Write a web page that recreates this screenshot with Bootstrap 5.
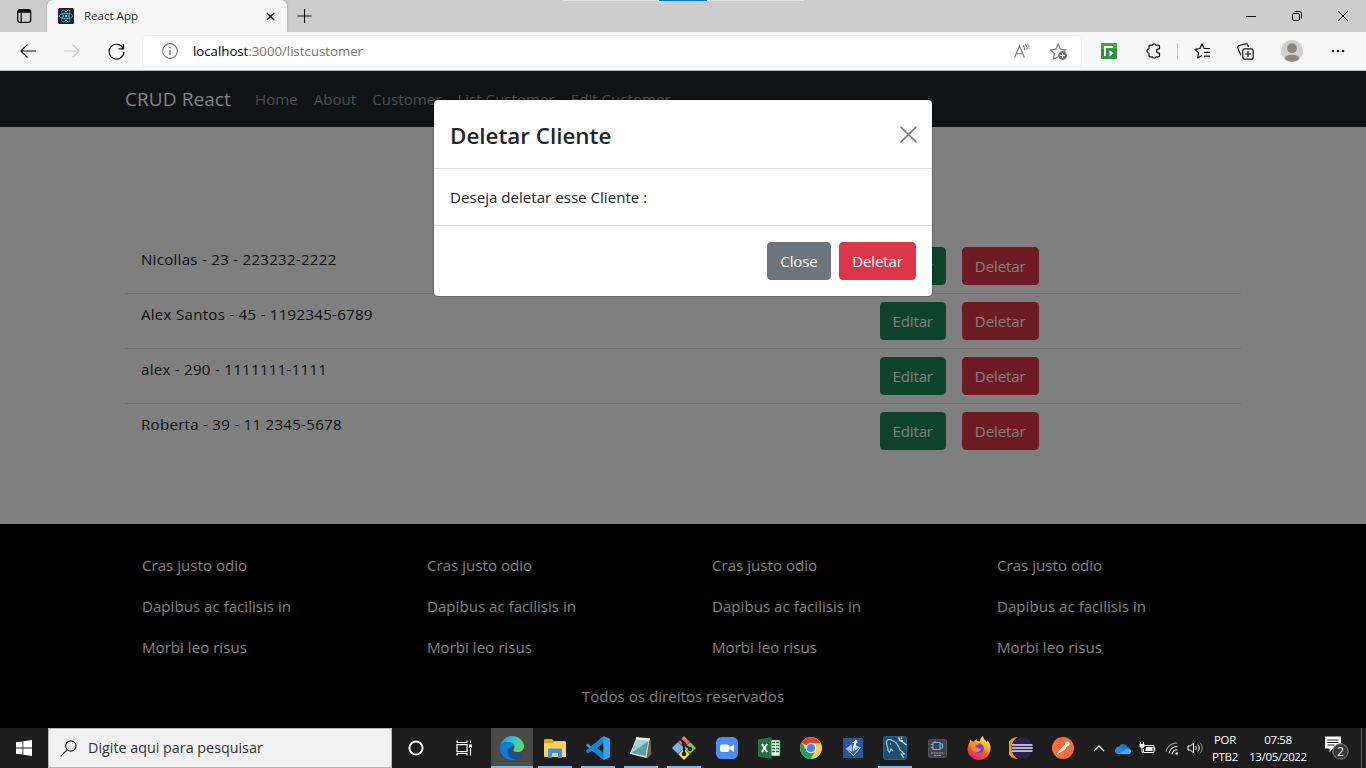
<!DOCTYPE html>
<html lang="pt-br">
<head>
<meta charset="utf-8">
<meta name="viewport" content="width=device-width, initial-scale=1">
<title>React App</title>
<link href="https://cdn.jsdelivr.net/npm/bootstrap@5.3.0/dist/css/bootstrap.min.css" rel="stylesheet">
<script src="https://cdn.jsdelivr.net/npm/bootstrap@5.3.0/dist/js/bootstrap.bundle.min.js" defer></script>
<style>
body{font-family:"Open Sans","Noto Sans",sans-serif;font-size:15.1px;line-height:24px;height:768px;overflow:hidden;letter-spacing:.01px}
svg{display:block;flex:none}
/* browser chrome */
.tabstrip{height:32px;background:#cdcdcd}
.snapbar{left:563px;top:0;width:241px;height:1px;background:linear-gradient(90deg,#e6e6e6 96px,#0078d7 96px 144px,#e6e6e6 144px)}
.tabmenu{width:47px}
.apptab{width:240px;background:#f7f7f7;border-radius:6px 6px 0 0;font-size:11.5px;padding:0 12px 0 11px;box-shadow:0 0 2px #0005;clip-path:inset(0 -3px 0 -3px)}
.tabtitle{margin-left:10px}
.winbtn{width:46px}
.toolbar{height:39px;background:#f7f7f7;border-bottom:1px solid #b9bdbd}
.navtools{width:143px;height:38px;padding-left:20px;gap:28px}
.urlbar{width:938px;height:30px;background:#fff;border-radius:4px;box-shadow:0 0 2px #0002;font-size:13.2px;color:#767676}
.urlbar b{font-weight:400;color:#000}
.urltext{margin-left:13px}
.staradd{margin:0 14px 0 20px}
.exttools{margin-left:20px}
.toolsep{width:1px;height:16px;background:#c3c3c3;margin-left:15px}
/* page */
.viewport{height:657px;background:#fff}
.viewport .container{max-width:1140px}
.dimmer{background:rgba(0,0,0,.5)}
.topnav{height:56px}
.topnav .navbar-brand{width:106px;font-size:19px;letter-spacing:.08px;white-space:nowrap}
.topnav .nav-link{white-space:nowrap}
.btn{--bs-btn-border-radius:.25rem;--bs-btn-font-size:15.1px;line-height:24px;padding-left:0;padding-right:0;text-align:center;letter-spacing:-.15px}
.w-edit{width:66px}.w-del{width:77px}.w-close{width:64px}
.customers{padding-top:112px;height:397px}
.customers .list-group-item{color:#212529;letter-spacing:.26px}
.pagefoot{height:204px;background:#000;color:#fff}
.pagefoot .container{padding-top:20px}
.pagefoot .list-group{--bs-list-group-bg:transparent;--bs-list-group-color:#fff;--bs-list-group-border-color:transparent}
.dialogbox{width:500px;top:28px;left:433px}
.dialogbox .modal-content{border:1px solid rgba(0,0,0,.2);background-clip:padding-box;border-radius:.3rem;overflow:hidden}
.dialogbox h4{font-weight:600;font-size:22.4px;line-height:36px;letter-spacing:0;padding-top:2px;margin-bottom:-2px}
.dialogbox h4+svg{margin-top:10px;margin-right:-.5px}
/* taskbar */
.taskbar{height:40px;background:#1d1d1d;color:#fff}
.cell{width:48px;height:40px}
.searchbox{width:344px;height:40px;background:#f1f1f1;border:1px solid #b9b9b9;color:#333;font-size:14.3px}
.searchbox svg,.searchbox span{margin-left:11px}
.task{width:42px;height:40px}
.apart{margin-right:1px}
.task.running::after{content:"";position:absolute;left:4px;right:4px;bottom:0;height:2px;background:#76b9ed}
.task.active{background:#4b4b4b}
.task.active::after{left:0;right:0}
.tray{width:24px;height:40px}
.traytext{font-size:11.5px;line-height:17px;height:40px;text-align:center;letter-spacing:-.33px;padding-top:3px;white-space:nowrap}
</style>
</head>
<body class="d-flex flex-column">

<header class="tabstrip d-flex position-relative flex-shrink-0">
  <div class="snapbar position-absolute"></div>
  <div class="tabmenu d-flex align-items-center justify-content-center">
    <svg width="16" height="16" viewBox="0 0 16 16" fill="none" stroke="#111" stroke-width="1.3"><rect x="1.7" y="1.700" width="13" height="12.600" rx="2.200"/><path d="M1.700 4h13M5.200 5v9"/><path d="M2 3h12.400" stroke-width="2.600"/></svg>
  </div>
  <div class="apptab d-flex align-items-center">
    <svg width="16" height="16" viewBox="0 0 16 16"><rect width="16" height="16" rx="1.500" fill="#20232a"/><g fill="none" stroke="#61dafb" stroke-width=".7" opacity=".85"><ellipse cx="8" cy="8" rx="6.800" ry="2.600"/><ellipse cx="8" cy="8" rx="6.800" ry="2.600" transform="rotate(60 8 8)"/><ellipse cx="8" cy="8" rx="6.800" ry="2.600" transform="rotate(120 8 8)"/></g><circle cx="8" cy="8" r="1.200" fill="#61dafb"/></svg>
    <span class="tabtitle me-auto">React App</span>
    <svg width="9" height="9" viewBox="0 0 10 10" stroke="#111" stroke-width="1.500"><path d="M1 1l8 8M9 1L1 9"/></svg>
  </div>
  <div class="d-flex align-items-center ps-2 ms-0 me-auto"><svg width="18" height="16" viewBox="0 0 18 16" stroke="#111" stroke-width="1.100"><path d="M9.500 1v14M2.500 8h14"/></svg></div>
  <div class="d-flex align-items-center">
    <div class="winbtn d-flex justify-content-center"><svg width="10" height="10" stroke="#111"><path d="M0 5.500h10"/></svg></div>
    <div class="winbtn d-flex justify-content-center"><svg width="10" height="10" viewBox="0 0 10 10" fill="none" stroke="#111"><rect x=".5" y="2.500" width="7" height="7" rx="1.400"/><path d="M2.500 .5h5a2 2 0 0 1 2 2v5"/></svg></div>
    <div class="winbtn d-flex justify-content-center"><svg width="10" height="10" viewBox="0 0 10 10" stroke="#111"><path d="M0 0l10 10M10 0L0 10"/></svg></div>
  </div>
</header>

<div class="toolbar d-flex align-items-center flex-shrink-0">
  <div class="navtools d-flex align-items-center">
    <svg width="16" height="16" viewBox="0 0 16 16" fill="none" stroke="#111" stroke-width="1.200"><path d="M16 8H.8M7.500 1.500L.8 8l6.700 6.500"/></svg>
    <svg width="16" height="16" viewBox="0 0 16 16" fill="none" stroke="#c8c8c8" stroke-width="1.200"><path d="M0 8h15.200M8.500 1.500L15.200 8l-6.700 6.500"/></svg>
    <svg width="17" height="17" viewBox="0 0 17 17" fill="none" stroke="#111" stroke-width="1.200"><path d="M15.200 5.500A7.400 7.400 0 1 0 15.900 9M15.500 .8v5h-5"/></svg>
  </div>
  <div class="urlbar d-flex align-items-center">
    <svg class="ms-3" width="20" height="18" viewBox="-3 -1 20 18" fill="none" stroke="#767676" stroke-width="1.100"><circle cx="8" cy="8" r="7.400"/><path d="M8 7v5M8 4v1.500" stroke-width="1.400"/></svg>
    <span class="urltext me-auto ps-1 ms-2 pe-1" style="padding-left:6px!important"><b>localhost</b>:3000/listcustomer</span>
    <svg width="16" height="16" viewBox="0 0 16 16" fill="none" stroke="#767676" stroke-width="1.100"><path d="M.6 14.500L5.500 3l4.900 11.500M2.300 10.700h6.500M9 2.500a5.200 5.200 0 0 1 1.400 4.500M11.200 1a8 8 0 0 1 2 5.800"/><path d="M13 0a9.500 9.500 0 0 1 2 5.500" opacity=".6"/></svg>
    <svg class="staradd" width="17" height="17" viewBox="0 0 17 17" fill="none" stroke="#767676" stroke-width="1.200"><path d="M8 14L3.500 16l.9-5.300L.7 7l5.200-.8L8.100 1l2.300 5.200 5.200.8-1.500 1.500"/><circle cx="12.600" cy="12.500" r="4.400" fill="#6e6e6e" stroke="none"/><path d="M12.600 10v5M10.100 12.500h5" stroke="#fff"/></svg>
  </div>
  <div class="exttools d-flex align-items-center">
    <svg width="16" height="16" viewBox="0 0 16 16"><rect width="16" height="16" rx="1" fill="#2f8f3a"/><rect width="16" height="6" rx="1" fill="#3ab047" opacity=".8"/><path d="M4 13V4h8" fill="none" stroke="#fff" stroke-width="2"/><path d="M8.500 7l4 3.200-4 3.300z" fill="#fff"/></svg>
    <svg style="margin-left:29px" width="16" height="16" viewBox="0 0 16 16" fill="none" stroke="#111" stroke-width="1.200" stroke-linejoin="round"><path d="M4 2.200h2.300a2 2 0 0 1 3.800 0h2.400a1 1 0 0 1 1 1v2.600h-.8a2.100 2.100 0 0 0 0 4.200h.8v2.800a1 1 0 0 1-1 1h-2.400a2 2 0 0 1-3.800 0H4a1 1 0 0 1-1-1V10a2.100 2.100 0 0 1 0-4.200V3.200a1 1 0 0 1 1-1z"/></svg>
    <i class="toolsep"></i>
    <svg style="margin-left:16px" width="17" height="16" viewBox="0 0 17 16" fill="none" stroke="#111" stroke-width="1.200" stroke-linejoin="round"><path d="M8 12.500L3.700 15l.9-5.100L1 6.300l4.900-.8L8 .8l2.100 4.700h6M10 9.400h6M10 13.200h6"/></svg>
    <svg style="margin-left:26px" width="17" height="17" viewBox="0 0 17 17" fill="none" stroke="#111" stroke-width="1.200"><rect x="5.800" y="5.800" width="10.400" height="10.400" rx="2"/><path d="M11 8v6M8 11h6M3.800 12.200L1 5.200a2 2 0 0 1 1-2.700L8.500.9a2 2 0 0 1 2.500 1.400L11.500 4"/></svg>
    <svg style="margin-left:27px" width="22" height="22" viewBox="0 0 22 22"><circle cx="11" cy="11" r="11" fill="#d2d0ce"/><circle cx="11" cy="8.200" r="5" fill="#8a8684"/><path d="M3.600 19a7.500 5 0 0 1 14.800 0A11 11 0 0 1 3.600 19z" fill="#8a8684"/></svg>
    <svg style="margin-left:28px" width="14" height="4" fill="#111"><circle cx="2" cy="2" r="1.300"/><circle cx="7" cy="2" r="1.300"/><circle cx="12" cy="2" r="1.300"/></svg>
  </div>
</div>

<main class="viewport position-relative flex-shrink-0">
  <nav class="navbar navbar-expand navbar-dark bg-dark topnav">
    <div class="container">
      <a class="navbar-brand" href="#">CRUD React</a>
      <div class="navbar-nav me-auto">
        <a class="nav-link" href="#">Home</a>
        <a class="nav-link" href="#">About</a>
        <a class="nav-link" href="#">Customer</a>
        <a class="nav-link" href="#">List Customer</a>
        <a class="nav-link" href="#">Edit Customer</a>
      </div>
    </div>
  </nav>
  <section class="container customers">
    <ul class="list-group list-group-flush">
      <li class="list-group-item"><div class="row"><div class="col-8">Nicollas - 23 - 223232-2222</div><div class="col-4 d-flex gap-3"><button class="btn btn-success w-edit">Editar</button><button class="btn btn-danger w-del">Deletar</button></div></div></li>
      <li class="list-group-item"><div class="row"><div class="col-8">Alex Santos - 45 - 1192345-6789</div><div class="col-4 d-flex gap-3"><button class="btn btn-success w-edit">Editar</button><button class="btn btn-danger w-del">Deletar</button></div></div></li>
      <li class="list-group-item"><div class="row"><div class="col-8">alex - 290 - 1111111-1111</div><div class="col-4 d-flex gap-3"><button class="btn btn-success w-edit">Editar</button><button class="btn btn-danger w-del">Deletar</button></div></div></li>
      <li class="list-group-item"><div class="row"><div class="col-8">Roberta - 39 - 11 2345-5678</div><div class="col-4 d-flex gap-3"><button class="btn btn-success w-edit">Editar</button><button class="btn btn-danger w-del">Deletar</button></div></div></li>
    </ul>
  </section>
  <footer class="pagefoot">
    <div class="container">
      <div class="row">
        <div class="col-3"><ul class="list-group"><li class="list-group-item">Cras justo odio</li><li class="list-group-item">Dapibus ac facilisis in</li><li class="list-group-item">Morbi leo risus</li></ul></div>
        <div class="col-3"><ul class="list-group"><li class="list-group-item">Cras justo odio</li><li class="list-group-item">Dapibus ac facilisis in</li><li class="list-group-item">Morbi leo risus</li></ul></div>
        <div class="col-3"><ul class="list-group"><li class="list-group-item">Cras justo odio</li><li class="list-group-item">Dapibus ac facilisis in</li><li class="list-group-item">Morbi leo risus</li></ul></div>
        <div class="col-3"><ul class="list-group"><li class="list-group-item">Cras justo odio</li><li class="list-group-item">Dapibus ac facilisis in</li><li class="list-group-item">Morbi leo risus</li></ul></div>
      </div>
      <p class="text-center mb-0 pt-3">Todos os direitos reservados</p>
    </div>
  </footer>
  <div class="dimmer position-absolute top-0 start-0 w-100 h-100"></div>
  <div class="dialogbox position-absolute" role="dialog">
    <div class="modal-content bg-white">
      <div class="d-flex justify-content-between p-3 border-bottom">
        <h4>Deletar Cliente</h4>
        <svg width="17" height="17" viewBox="0 0 16 16" stroke="#7f7f7f" stroke-width="1.600" stroke-linecap="round"><path d="M1 1l14 14M15 1L1 15"/></svg>
      </div>
      <div class="p-3 text-body">Deseja deletar esse Cliente :</div>
      <div class="d-flex justify-content-end gap-2 p-3 border-top">
        <button class="btn btn-secondary w-close">Close</button>
        <button class="btn btn-danger w-del">Deletar</button>
      </div>
    </div>
  </div>
</main>

<footer class="taskbar d-flex align-items-center flex-shrink-0">
  <div class="cell d-flex align-items-center justify-content-center"><svg width="16" height="16" viewBox="0 0 16 16" fill="#fff"><path d="M0 2.300l6.500-.9v6.200H0zM7.300 1.300L16 0v7.600H7.300zM0 8.400h6.500v6.200L0 13.700zM7.300 8.400H16V16l-8.700-1.300z"/></svg></div>
  <div class="searchbox d-flex align-items-center"><svg width="17" height="17" viewBox="0 0 17 17" fill="none" stroke="#222" stroke-width="1.200"><circle cx="10.800" cy="6" r="5.200"/><path d="M7.200 9.800L.6 16.400"/></svg><span>Digite aqui para pesquisar</span></div>
  <div class="cell d-flex align-items-center justify-content-center"><svg width="16" height="16" fill="none" stroke="#fff" stroke-width="2"><circle cx="8" cy="8" r="6.600"/></svg></div>
  <div class="cell d-flex align-items-center justify-content-center" style="margin-right:3px"><svg width="17" height="16" viewBox="0 0 17 16" fill="none" stroke="#fff" stroke-width="1.200"><rect x="1" y="4.600" width="10" height="7"/><path d="M1 .5v2h10v-2M1 15.500v-2h10v2M14.500.5v2.500M14.500 8v7.500"/><path d="M13 4.500h3v3h-3z" fill="#fff" stroke="none"/></svg></div>

  <div class="task apart active running position-relative d-flex align-items-center justify-content-center">
    <svg width="24" height="24" viewBox="0 0 24 24"><defs><linearGradient id="eg" x1="0" x2="1" y1=".2" y2=".4"><stop stop-color="#2390dd"/><stop offset=".55" stop-color="#36c3d8"/><stop offset="1" stop-color="#5fdf59"/></linearGradient></defs><path d="M0 11C1 4 6 0 12 0s12 4.500 12 10c0 4-3 6-6.500 6-3 0-4-1-4-2 0-.8 1-1.400 1-3C14.500 8 11 6 7.500 6 3 6 .8 9 0 11z" fill="url(#eg)"/><path d="M0 12C0 8 3.500 6 7.500 6c3.500 0 7 2 7 4.500-1-1.200-5.500-.5-5.500 4.500 0 5 4.500 8.800 7 8-1.300.7-2.600 1-4 1C5 24 0 18.500 0 12z" fill="#0a7fd6"/><path d="M9.500 11.500C7.500 13 7 16 8.500 19s5 5 7.500 4.100c3-.8 5.500-3 6.500-4.900.4-.7-.2-1-.7-.7-3 1.600-8 1.500-10.300-.7-1.800-1.800-2.400-4-2-5.300z" fill="#10519b"/></svg>
  </div>
  <div class="task apart running position-relative d-flex align-items-center justify-content-center">
    <svg width="22" height="20" viewBox="0 0 22 20"><path d="M0 2a1.200 1.200 0 0 1 1-1h7l2 2h11v6H0z" fill="#e8a30c"/><path d="M0 5h9l1.500-1.500H22V19H0z" fill="#ffd363"/><path d="M4 20v-8.500a1 1 0 0 1 1-1h12a1 1 0 0 1 1 1V20h-4v-5H8v5z" fill="#3b92d6"/></svg>
  </div>
  <div class="task apart running position-relative d-flex align-items-center justify-content-center">
    <svg width="24" height="24" viewBox="0 0 24 24"><path d="M18 0L5 14.200 2 16.500.3 15.300v-1L18 0z" fill="#168bd2"/><path d="M18 24L2 7.500.3 8.700v1L18 24z" fill="#1f9cf0"/><path d="M17.500 0L24 3v18l-6.500 3V7l-6.500 5 6.500 5v7L6 14.500 2 17.500.2 16.300v-1.200L17.500 0z" fill="#1487cf"/><path d="M17.500 0L24 3v18l-6.500 3z" fill="#2aa6f3"/></svg>
  </div>
  <div class="task apart running position-relative d-flex align-items-center justify-content-center">
    <svg width="24" height="24" viewBox="0 0 24 24"><path d="M8 2l13.500 1 .8 15-3.500 4-16-3.500z" fill="#7d6247"/><path d="M7.500 1.500l13 1.300L17.500 22 .8 17.800z" fill="#d5e6e8"/><path d="M8 4l11.500 1L16.500 20 2.500 17z" fill="#5f9ea9"/><path d="M8 4l11.500 1L2.500 17z" fill="#a3d3d9"/><path d="M7 1.300l14 .9-.3 1.800-14-1z" fill="#ededed"/></svg>
  </div>
  <div class="task apart running position-relative d-flex align-items-center justify-content-center">
    <svg width="24" height="24" viewBox="0 0 24 24"><path d="M12 0l5.700 5.700L12 11.400 6.300 5.700z" fill="#f06a6a"/><path d="M6 6l6 6-6 6-6-6z" fill="#7fabf0"/><path d="M18 6l6 6-6 6-6-6z" fill="#75c655"/><path d="M12 12.600l5.700 5.700L12 24l-5.700-5.700z" fill="#f7dc5a"/><g stroke="#222" stroke-width="2" fill="none"><path d="M8 3l4 4v12M12 8l6 5"/></g><g fill="#222"><circle cx="12" cy="8" r="2.300"/><circle cx="18" cy="13" r="2.200"/><circle cx="12" cy="18" r="2.300"/></g></svg>
  </div>
  <div class="task d-flex align-items-center justify-content-center">
    <svg width="22" height="22" viewBox="0 0 22 22"><rect width="22" height="22" rx="5.500" fill="#4a8cf7"/><rect x="4" y="7.500" width="9.500" height="7.500" rx="2" fill="#fff"/><path d="M14.200 10l3.800-2.500v7.500l-3.800-2.500z" fill="#fff"/></svg>
  </div>
  <div class="task d-flex align-items-center justify-content-center">
    <svg width="23" height="22" viewBox="0 0 23 22"><path d="M12 3h10v16H12z" fill="#f4faf5" stroke="#207245" stroke-width=".8"/><path d="M14 5.500h3M18 5.500h3M14 8.500h3M18 8.500h3M14 11.500h3M18 11.500h3M14 14.500h3M18 14.500h3" stroke="#207245" stroke-width="1.300"/><path d="M0 2.500L13.500 0v22L0 19.500z" fill="#207245"/><path d="M4 7l5 8M9 7l-5 8" stroke="#fff" stroke-width="1.900"/></svg>
  </div>
  <div class="task d-flex align-items-center justify-content-center">
    <svg width="22" height="22" viewBox="0 0 22 22"><circle cx="11" cy="11" r="11" fill="#ffcd40"/><path d="M1.500 5.500A11 11 0 0 1 20.600 6H11v5z" fill="#e14033"/><path d="M1.500 5.500A11 11 0 0 0 10.500 22l5-8.500L11 11 6.700 13.500z" fill="#1fa15d"/><circle cx="11" cy="11" r="5.300" fill="#fff"/><circle cx="11" cy="11" r="4.100" fill="#4285f4"/></svg>
  </div>
  <div class="task d-flex align-items-center justify-content-center">
    <svg width="20" height="20" viewBox="0 0 20 20"><rect width="20" height="20" fill="#26579a"/><path d="M3 10.500L9 6v8zM17.500 9.500L12 7l-1 6z" fill="#a9c3e0"/><path d="M3 10.500L10.500 17.500 17.500 9.500" fill="none" stroke="#dce8f4"/><path d="M10 14.500c-1-4 .5-7 1.200-9.500H9l4-3.500L15 5h-1.700c0 4-2.300 5-3.300 9.500z" fill="#fff"/></svg>
  </div>
  <div class="task running position-relative d-flex align-items-center justify-content-center">
    <svg width="24" height="24" viewBox="0 0 24 24"><rect x=".5" y=".5" width="23" height="23" rx="2.500" fill="#1d5070" stroke="#2f6685"/><path d="M6.500 16.500l-1.500-2C5 10 3 8 3.500 5.500 4 3 7 3 9 4.500c4 1 6.500 5 8 9.500l4.500 4-3.500 0 3 4M6.500 16.500L8 13l2 2M7 7.500l1 1" fill="none" stroke="#b9d0dd" stroke-width="1.100"/><path d="M15.500 1.500l1.500 3 3 .5M18 1.500l1 1.500M18.500 5l5 4" fill="none" stroke="#d9e6ed" stroke-width="1.500"/></svg>
  </div>
  <div class="task d-flex align-items-center justify-content-center">
    <svg width="19" height="19" viewBox="0 0 19 19"><rect x=".5" y=".5" width="18" height="18" rx="1.500" fill="#453e4b" stroke="#574d5b"/><path d="M5 3.500h7v7H5zM12 5h2.500v4H12M3 5.500h2M3 8.500h2M7 2v2" fill="none" stroke="#6fb7dd" stroke-width="1.100"/><path d="M3 14h13M6 16.500h7" stroke="#b9b2bc" stroke-width=".8" stroke-dasharray="2 .6"/></svg>
  </div>
  <div class="task d-flex align-items-center justify-content-center">
    <svg width="24" height="24" viewBox="0 0 24 24"><defs><linearGradient id="fx" x1=".8" x2=".3" y1="0" y2="1"><stop stop-color="#fff04a"/><stop offset=".35" stop-color="#ffb62a"/><stop offset=".65" stop-color="#ff552d"/><stop offset="1" stop-color="#e8157f"/></linearGradient></defs><path d="M3.500 3.500C4 5 5 5.500 7 5.500 8.500 4 9 3.500 10 3.500L9.800 5c2 0 2.500.5 3 .8C13 3.500 14 1.500 16 0c.2 3 2.500 4 4 6.500l.3-2C23 7 24 10 23.500 13 23 19.500 18 24 12 24S.5 19.300.5 13C.5 9 2.500 7.500 3.500 3.500z" fill="url(#fx)"/><circle cx="12" cy="12.500" r="5" fill="#7542d6"/><path d="M4 8c3-2 5 0 8 0-.5 1.500-3.500 1-3.500 3 2 .5 3 2.500 6 1.500-1 3.500-5 4.500-8 2.500C4.500 13.500 4 11 4 8z" fill="#ff8a1f"/></svg>
  </div>
  <div class="task d-flex align-items-center justify-content-center">
    <svg width="24" height="22" viewBox="0 0 24 22"><path d="M9 0A11 11 0 0 0 9 22 12.500 12.500 0 0 1 9 0z" fill="#f7941e"/><circle cx="13.500" cy="11" r="10.500" fill="#2c2255"/><path d="M3 8h20.500M2.700 11h21M3 14h20.500" stroke="#e6e3f0" stroke-width="1.700"/></svg>
  </div>
  <div class="task d-flex align-items-center justify-content-center">
    <svg width="22" height="22" viewBox="0 0 22 22"><circle cx="11" cy="11" r="11" fill="#ff6c37"/><path d="M5 17l6-7 3 1.500zM10.500 10.500l3-3 1.500 1.500-3 3z" fill="#fff" stroke="#fff" stroke-width=".9"/><circle cx="15.300" cy="6.700" r="2.300" fill="#fff"/></svg>
  </div>

  <div class="tray d-flex align-items-center justify-content-center" style="margin-left:3px"><svg width="12" height="8" fill="none" stroke="#fff" stroke-width="1.400"><path d="M1 7l5-5 5 5"/></svg></div>
  <div class="tray d-flex align-items-center justify-content-center"><svg width="16" height="11" viewBox="0 0 16 11"><path d="M4 4a4.500 4.500 0 0 1 8.300-.5A4 4 0 0 1 14 10H3.500A3.200 3.200 0 0 1 4 4z" fill="#1276d0"/><path d="M.8 5.500C2 3.500 4 3.600 5.500 4.300l7.500 5L3.500 11A3.300 3.300 0 0 1 .8 5.500z" fill="#1d8ae3"/><path d="M3.500 11L12 5.500c3 0 4.200 1.500 4 3.200-.3 1.500-1.200 2.300-3 2.300z" fill="#34b1f2"/></svg></div>
  <div class="tray d-flex align-items-center justify-content-center"><svg width="17" height="12" viewBox="0 0 17 12" fill="none" stroke="#fff" stroke-width="1"><path d="M5.500 3.500h9.500v7H4.500V7M15.800 5.500v3"/><path d="M7 5h6.500v4H6.500z" fill="#fff" stroke="none"/><path d="M1.500 0v2M4.500 0v2M3 5.500V10.500h1.500"/><path d="M.5 2h5v2.500l-1.500 1.500h-2L.5 4.500z" fill="#fff" stroke="none"/></svg></div>
  <div class="tray d-flex align-items-center justify-content-center" style="width:26px"><svg width="14" height="14" viewBox="0 0 14 14" fill="none" stroke="#ddd" stroke-width="1.100"><path d="M1 11A10.500 10.500 0 0 1 12.500 2.200" opacity=".6"/><path d="M4 12.500A8 8 0 0 1 12.500 5.500M7 13.500a6 6 0 0 1 5.500-5"/><circle cx="11.700" cy="12.500" r="1.300" fill="#fff" stroke="none"/></svg></div>
  <div class="tray d-flex align-items-center justify-content-center" style="width:20px"><svg width="17" height="14" viewBox="0 0 17 14" fill="none" stroke="#fff" stroke-width="1"><path d="M1 5h2.500l3-3v10l-3-3H1zM8.500 5a3 3 0 0 1 0 4M10.800 3.500a5 5 0 0 1 0 7"/><path d="M13 1.500a8 8 0 0 1 0 11" opacity=".5"/></svg></div>
  <div class="traytext" style="width:40px">POR<br>PTB2</div>
  <div class="traytext" style="width:66px">07:58<br>13/05/2022</div>
  <div class="d-flex align-items-center" style="margin-left:14px"><svg width="26" height="28" viewBox="0 0 26 26"><path d="M0 1.500h16v12H8l-3.500 4v-4H0z" fill="#fff"/><path d="M2.500 5h11M2.500 7.500h11M2.500 10h7" stroke="#1d1d1d"/><circle cx="15.500" cy="16.500" r="7.700" fill="#3a3a3a" stroke="#858585"/><text x="15.500" y="20.700" font-size="12" text-anchor="middle" fill="#fff">2</text></svg></div>
  <i style="width:1px;height:40px;background:#5a5a5a;margin-left:auto;margin-right:4px"></i>
</footer>
</body>
</html>
